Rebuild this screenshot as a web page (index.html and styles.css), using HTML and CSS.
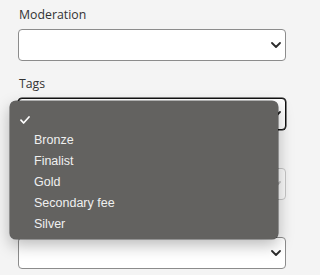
FILE: index.html
```html
<!DOCTYPE html>
<html>
<head>
<meta charset="utf-8">
<link rel="stylesheet" href="styles.css">
</head>
<body>
<div class="form">
  <div class="field">
    <label class="label">Moderation</label>
    <div class="select">
      <svg class="chev" width="10" height="6" viewBox="0 0 10 6"><path d="M1 1 L5 5 L9 1" fill="none" stroke="currentColor" stroke-width="1.8" stroke-linecap="round" stroke-linejoin="round"/></svg>
    </div>
  </div>
  <div class="field">
    <label class="label">Tags</label>
    <div class="select focused">
      <svg class="chev" width="10" height="6" viewBox="0 0 10 6"><path d="M1 1 L5 5 L9 1" fill="none" stroke="currentColor" stroke-width="1.8" stroke-linecap="round" stroke-linejoin="round"/></svg>
    </div>
  </div>
  <div class="field">
    <label class="label">&nbsp;</label>
    <div class="select disabled">
      <svg class="chev" width="10" height="6" viewBox="0 0 10 6"><path d="M1 1 L5 5 L9 1" fill="none" stroke="currentColor" stroke-width="1.8" stroke-linecap="round" stroke-linejoin="round"/></svg>
    </div>
  </div>
  <div class="field">
    <label class="label">&nbsp;</label>
    <div class="select">
      <svg class="chev" width="10" height="6" viewBox="0 0 10 6"><path d="M1 1 L5 5 L9 1" fill="none" stroke="currentColor" stroke-width="1.8" stroke-linecap="round" stroke-linejoin="round"/></svg>
    </div>
  </div>
</div>
<ul class="menu">
  <li class="item checked"><svg class="check" width="10" height="8" viewBox="0 0 10 8"><path d="M1 4.2 L3.6 7 L9 1" fill="none" stroke="currentColor" stroke-width="1.7" stroke-linecap="round" stroke-linejoin="round"/></svg></li>
  <li class="item">Bronze</li>
  <li class="item">Finalist</li>
  <li class="item">Gold</li>
  <li class="item">Secondary fee</li>
  <li class="item">Silver</li>
</ul>
</body>
</html>
```

FILE: styles.css
```css
html, body {
  margin: 0;
  padding: 0;
  background: #f4f4f4;
}
body {
  position: relative;
  width: 303px;
  height: 275px;
  overflow: hidden;
}
.form {
  padding: 6px 17px 0 18px;
  display: flex;
  flex-direction: column;
  gap: 14.4px;
}
.field {
  display: flex;
  flex-direction: column;
  gap: 5px;
}
.label {
  font-family: "Open Sans", sans-serif;
  font-size: 12.3px;
  line-height: 18px;
  height: 18px;
  color: #333;
  padding-left: 1px;
}
.select {
  box-sizing: border-box;
  height: 32px;
  background: #fff;
  border: 1px solid #8c8c8c;
  border-radius: 4px;
  display: flex;
  align-items: center;
  justify-content: flex-end;
  padding-right: 4px;
  color: #2b2b2b;
}
.select.focused {
  border-color: #111;
  box-shadow: 0 0 0 0.5px #111;
}
.select.disabled {
  border-color: #c6c6c6;
  color: #c4c4c4;
  background: #fafafa;
}
.chev {
  display: block;
}
.menu {
  position: absolute;
  left: 10px;
  top: 101px;
  width: 268px;
  height: 138px;
  box-sizing: border-box;
  margin: 0;
  padding: 8px 0 4px 0;
  list-style: none;
  background: #636260;
  border-radius: 6px;
  box-shadow: 0 0 0 0.6px rgba(0,0,0,0.55), 0 6px 16px rgba(0,0,0,0.28);
}
.item {
  height: 21px;
  line-height: 21px;
  padding-left: 24px;
  font-family: "Liberation Sans", Arial, sans-serif;
  font-size: 12.5px;
  color: #f0f0f0;
  display: flex;
  align-items: center;
}
.item.checked {
  padding-left: 10px;
  color: #fff;
}
.check {
  display: block;
}
```
